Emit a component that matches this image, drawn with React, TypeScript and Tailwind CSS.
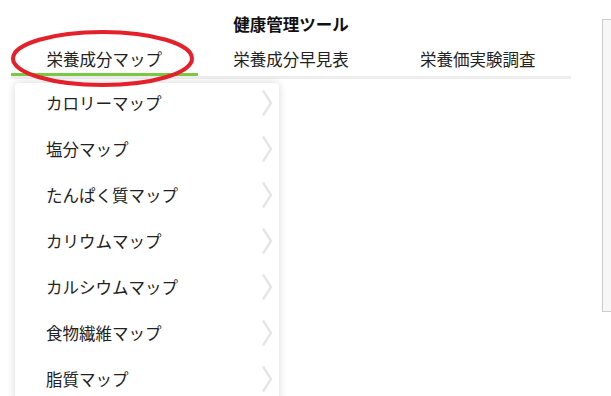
import React from "react";

const tabs = ["栄養成分マップ", "栄養成分早見表", "栄養価実験調査"];

const menuItems = [
  "カロリーマップ",
  "塩分マップ",
  "たんぱく質マップ",
  "カリウムマップ",
  "カルシウムマップ",
  "食物繊維マップ",
  "脂質マップ",
];

function Chevron() {
  return (
    <svg width="12" height="28" viewBox="0 0 12 28" className="shrink-0">
      <polyline points="2,1.5 10,14 2,26.5" fill="none" stroke="#e6e6e6" strokeWidth="2.5" />
    </svg>
  );
}

export default function App() {
  return (
    <div
      className="relative flex w-[611px] h-[396px] overflow-hidden bg-white text-[#222222]"
      style={{ fontFamily: '"Noto Sans CJK JP", "Noto Sans", sans-serif' }}
    >
      {/* Main column */}
      <div className="ml-[11px] w-[560px] shrink-0">
        <div className="pt-[12px] h-[36px] text-center text-[16.5px] leading-[24px] font-bold text-[#111111]">
          健康管理ツール
        </div>

        <div className="relative">
          {/* Tabs */}
          <div className="flex border-b-[3px] border-[#eeeeee]">
            {tabs.map((t, i) => (
              <div
                key={t}
                className={`flex-1 pt-[11px] pb-[2px] text-center text-[16.5px] leading-[24px] border-b-[3px] ${
                  i === 0 ? "border-[#7ac943]" : "border-transparent"
                }`}
              >
                {t}
              </div>
            ))}
          </div>

          {/* Dropdown menu */}
          <div className="absolute left-[4px] top-full mt-[4px] w-[264px] rounded-[4px] bg-white shadow-[0_0_8px_rgba(0,0,0,0.16)] z-10">
            {menuItems.map((m) => (
              <div key={m} className="flex items-center h-[46px] pl-[31px] pr-[6px] pb-[6px]">
                <span className="flex-1 text-[16.5px] leading-[24px]">{m}</span>
                <Chevron />
              </div>
            ))}
          </div>
        </div>
      </div>

      {/* Right side box */}
      <div className="ml-[31px] mt-[19px] h-[293px] w-[40px] shrink-0 border border-[#cccccc] bg-[#f7f7f7]" />

      {/* Red annotation ellipse */}
      <svg className="absolute left-0 top-0 pointer-events-none z-20" width="220" height="100">
        <ellipse cx="102.5" cy="58.5" rx="89.5" ry="26.5" fill="none" stroke="#e5202a" strokeWidth="4" />
      </svg>
    </div>
  );
}
